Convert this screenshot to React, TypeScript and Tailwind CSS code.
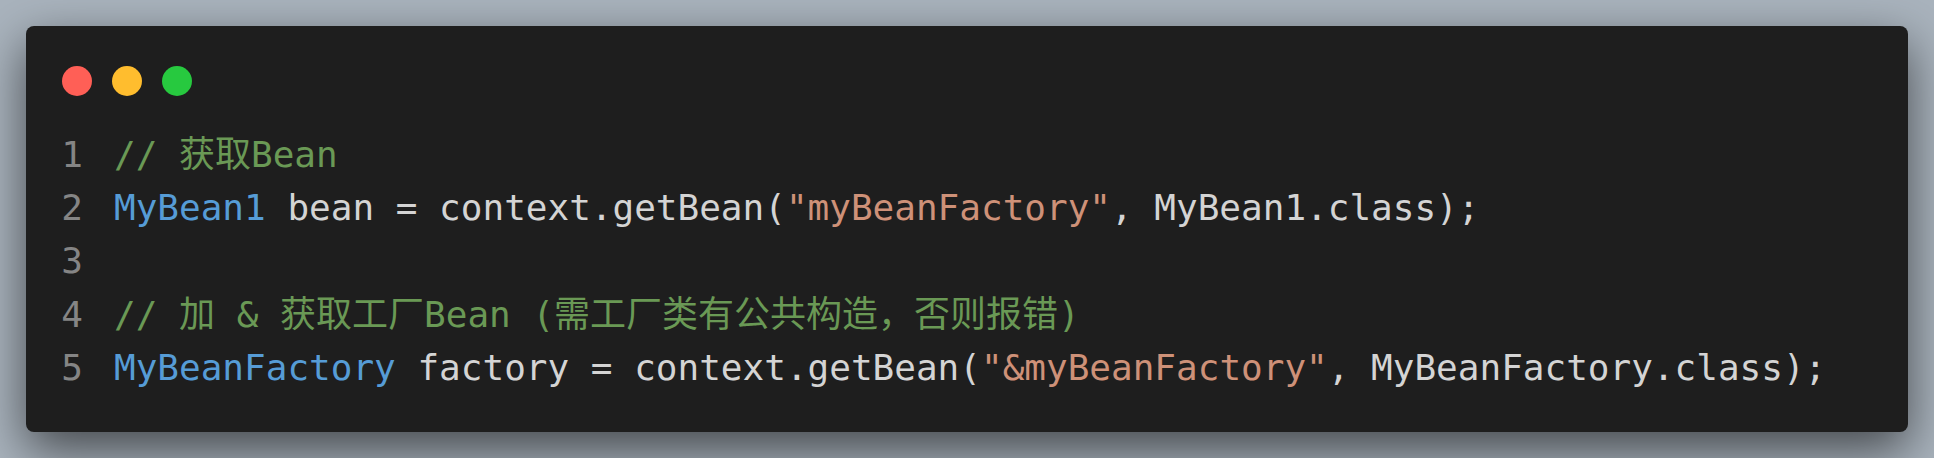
type Tok = { t: string; c: string };

const C = {
  plain: 'text-[#d4d4d4]',
  type: 'text-[#569cd6]',
  str: 'text-[#ce9178]',
  cmt: 'text-[#6a9955]',
};

const lines: Tok[][] = [
  [{ t: '// 获取Bean', c: C.cmt }],
  [
    { t: 'MyBean1', c: C.type },
    { t: ' bean = context.getBean(', c: C.plain },
    { t: '"myBeanFactory"', c: C.str },
    { t: ', MyBean1.class);', c: C.plain },
  ],
  [],
  [{ t: '// 加 & 获取工厂Bean (需工厂类有公共构造，否则报错)', c: C.cmt }],
  [
    { t: 'MyBeanFactory', c: C.type },
    { t: ' factory = context.getBean(', c: C.plain },
    { t: '"&myBeanFactory"', c: C.str },
    { t: ', MyBeanFactory.class);', c: C.plain },
  ],
];

export default function App() {
  return (
    <div className="h-[458px] w-full bg-[#a9b3bd] p-[26px]">
      <div className="h-full rounded-[8px] bg-[#1e1e1e] pl-[35px] pr-6 pt-[40px] shadow-[0_18px_50px_rgba(0,0,0,0.6)]">
        {/* window buttons */}
        <div className="flex gap-5 pl-[1px]">
          <span className="h-[30px] w-[30px] rounded-full bg-[#ff5f56]" />
          <span className="h-[30px] w-[30px] rounded-full bg-[#ffbd2e]" />
          <span className="h-[30px] w-[30px] rounded-full bg-[#27c93f]" />
        </div>

        {/* code */}
        <div className="mt-[31.6px] font-['DejaVu_Sans_Mono','Noto_Sans_CJK_SC',monospace] text-[36px] leading-[53.33px] whitespace-pre">
          {lines.map((toks, i) => (
            <div key={i} className="flex h-[53.33px]">
              <span className="w-[22px] text-right text-[#858585]">{i + 1}</span>
              <span className="ml-[31px]">
                {toks.map((tok, j) => (
                  <span key={j} className={tok.c}>
                    {tok.t}
                  </span>
                ))}
              </span>
            </div>
          ))}
        </div>
      </div>
    </div>
  );
}
